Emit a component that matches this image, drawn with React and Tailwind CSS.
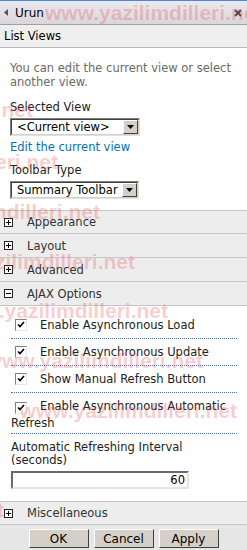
const marks = [
  { top: 1, left: 45 },
  { top: 98, right: 214 },
  { top: 150, right: 189 },
  { top: 200, right: 147 },
  { top: 250, right: 112 },
  { top: 299, right: 79 },
  { top: 349, right: 44 },
  { top: 399, right: 10 },
  { top: 498, right: 243 },
];

function PlusBox({ open }) {
  return (
    <span className="flex h-[9px] w-[9px] items-center justify-center border border-[#222] bg-white">
      <svg width="7" height="7" viewBox="0 0 7 7">
        <rect x="1" y="3" width="5" height="1" fill="#000" />
        {!open && <rect x="3" y="1" width="1" height="5" fill="#000" />}
      </svg>
    </span>
  );
}

function Section({ title, open, top }) {
  return (
    <div
      className={
        "flex h-[24px] items-center border-b border-[#c6c6c6] bg-[#ededed] pl-[4px] " +
        (top ? "border-t" : "")
      }
    >
      <PlusBox open={open} />
      <span className="ml-[14px] text-[#333]">{title}</span>
    </div>
  );
}

function Select({ value, width }) {
  return (
    <div
      className="flex h-[18px] items-center border border-t-[#808080] border-l-[#808080] border-r-[#e0e0e0] border-b-[#e0e0e0]"
      style={{ width }}
    >
      <div className="flex h-full flex-1 items-center border border-t-[#404040] border-l-[#404040] border-r-[#d4d0c8] border-b-[#d4d0c8] bg-white pl-[5px]">
        <span className="flex-1 whitespace-nowrap text-black">{value}</span>
        <span className="flex h-[14px] w-[15px] shrink-0 items-center justify-center border border-t-white border-l-white border-r-[#404040] border-b-[#404040] bg-[#d4d0c8]">
          <svg width="7" height="4" viewBox="0 0 7 4">
            <path d="M0 0h7L3.5 4z" fill="#000" />
          </svg>
        </span>
      </div>
    </div>
  );
}

function Check() {
  return (
    <span className="inline-flex h-[12px] w-[12px] items-center justify-center border border-t-[#808080] border-l-[#808080] border-r-[#e8e8e8] border-b-[#e8e8e8] bg-white align-[-2px]">
      <svg width="8" height="8" viewBox="0 0 8 8">
        <path d="M1 3.5l2 2 4-4.5" stroke="#000" strokeWidth="1.6" fill="none" />
      </svg>
    </span>
  );
}

function CheckRow({ label }) {
  return (
    <div className="flex h-[27px] items-center border-b border-dotted border-[#4a74d4] pl-[4px]">
      <Check />
      <span className="ml-[13px] text-[#222]">{label}</span>
    </div>
  );
}

function Button({ children }) {
  return (
    <button className="h-[19px] w-[60px] border border-t-white border-l-white border-r-[#404040] border-b-[#404040] bg-[#d4d0c8] text-[12px] leading-none text-black">
      {children}
    </button>
  );
}

export default function App() {
  return (
    <div className="relative h-[550px] w-[247px] overflow-hidden bg-white font-['DejaVu_Sans',Verdana,sans-serif] text-[11.5px] leading-[14px]">
      {/* title bar */}
      <div className="flex h-[25px] items-center border-t border-b border-t-[#4a8ad8] border-b-[#a0a0a0] bg-gradient-to-b from-[#ebe9ee] to-[#d9d7dc] pl-[4px] pr-[5px]">
        <svg width="4" height="7" viewBox="0 0 4 7">
          <path d="M4 0v7L0 3.5z" fill="#555" />
        </svg>
        <span className="ml-[7px] flex-1 text-[12px] text-black">Urun</span>
        <svg width="8" height="8" viewBox="0 0 8 8">
          <path d="M1 1l6 6M7 1L1 7" stroke="#4a4a4a" strokeWidth="2" />
        </svg>
      </div>

      {/* list views header */}
      <div className="flex h-[23px] items-center border-b border-[#b8b8b8] bg-[#efefef] pl-[4px] text-black">
        List Views
      </div>

      <div className="px-[10px] pt-[13px]">
        <p className="whitespace-nowrap text-[#6a6a6a]">
          You can edit the current view or select
          <br />
          another view.
        </p>
        <div className="mt-[11px] text-[#222]">Selected View</div>
        <div className="mt-[4px]">
          <Select value="<Current view>" width={130} />
        </div>
        <div className="mt-[4px] text-[#0072bc]">Edit the current view</div>
        <div className="mt-[9px] text-[#222]">Toolbar Type</div>
        <div className="mt-[4px] mb-[11px]">
          <Select value="Summary Toolbar" width={129} />
        </div>
      </div>

      <Section title="Appearance" top />
      <Section title="Layout" />
      <Section title="Advanced" />
      <Section title="AJAX Options" open />

      <div className="ml-[11px] w-[226px] pt-[6px]">
        <CheckRow label="Enable Asynchronous Load" />
        <CheckRow label="Enable Asynchronous Update" />
        <CheckRow label="Show Manual Refresh Button" />
        <div className="border-b border-dotted border-[#4a74d4] pt-[5px] pb-[1px] leading-[17px] text-[#222]">
          <span className="ml-[4px] mr-[13px]">
            <Check />
          </span>
          Enable Asynchronous Automatic
          <br />
          Refresh
        </div>
        <div className="pt-[7px] leading-[13px] text-[#222]">
          Automatic Refreshing Interval
          <br />
          (seconds)
        </div>
        <div className="mt-[4px] mb-[12px] flex h-[18px] w-[178px] items-center justify-end border-2 border-t-[#6a6a6a] border-l-[#6a6a6a] border-r-[#e4e4e4] border-b-[#e4e4e4] bg-white pr-[2px] text-black">
          60
        </div>
      </div>

      <Section title="Miscellaneous" top />

      <div className="flex h-[28px] justify-center gap-[5px] bg-[#e6e6e6] pt-[4px]">
        <Button>OK</Button>
        <Button>Cancel</Button>
        <Button>Apply</Button>
      </div>

      {/* watermark */}
      {marks.map((m, i) => (
        <span
          key={i}
          className="pointer-events-none absolute whitespace-nowrap font-['Liberation_Sans',Arial,sans-serif] text-[21px] leading-[24px] font-bold text-[#e83a3a]/25"
          style={{ top: m.top, right: m.right, left: m.left }}
        >
          www.yazilimdilleri.net
        </span>
      ))}
    </div>
  );
}
